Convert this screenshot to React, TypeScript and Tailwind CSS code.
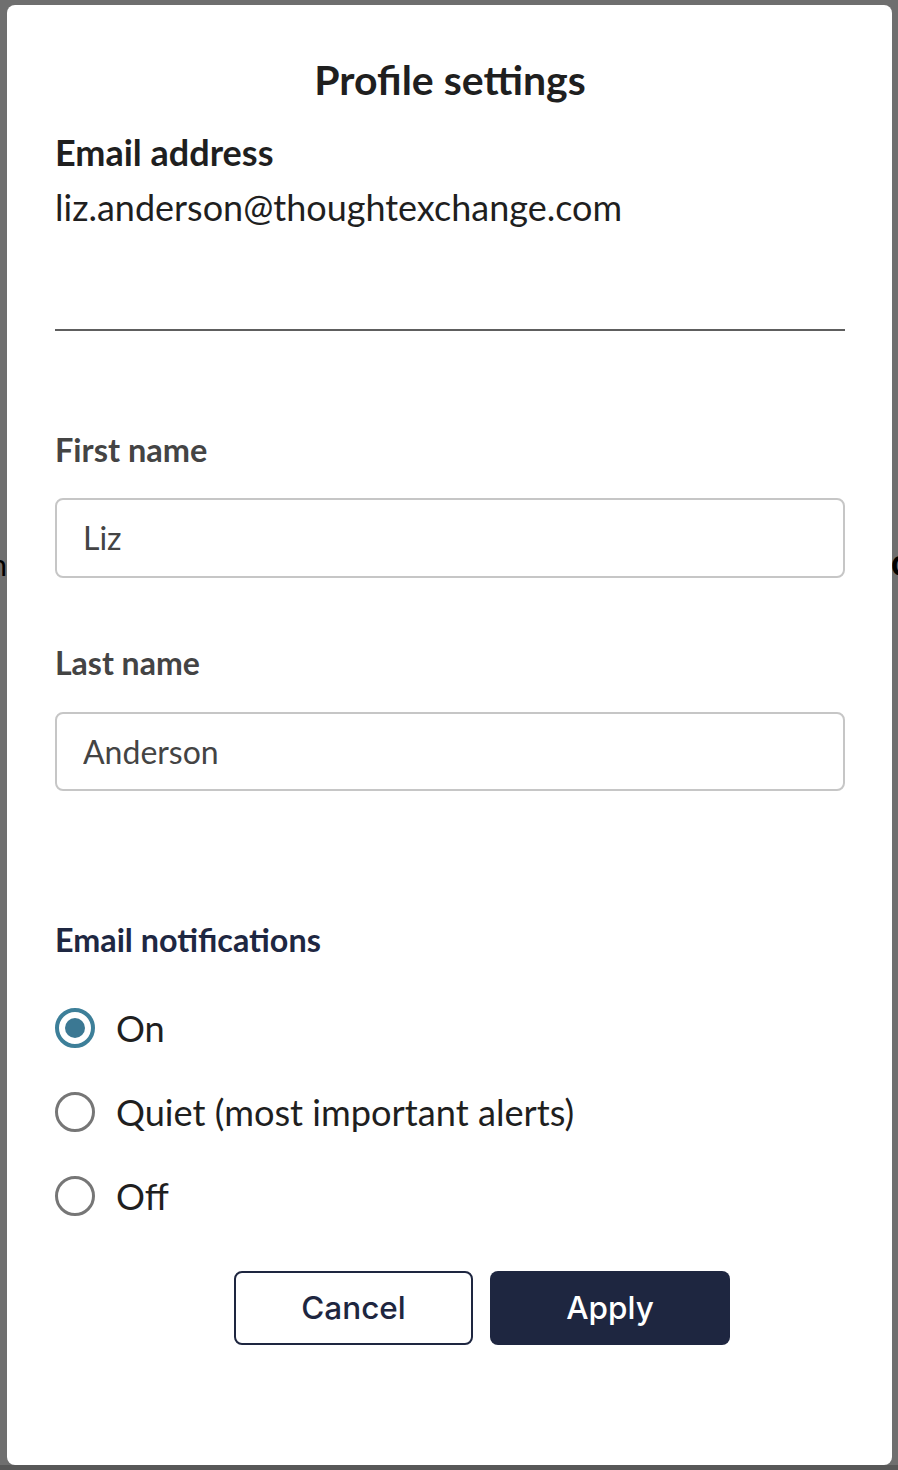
import { useState } from "react"

const NOTIFY_OPTIONS = [
  { value: "on", label: "On" },
  { value: "quiet", label: "Quiet (most important alerts)" },
  { value: "off", label: "Off" },
]

const lato = { fontFamily: "Lato, 'Noto Sans', sans-serif" }

const Radio = ({ checked }: { checked: boolean }) =>
  checked ? (
    <span className="flex size-[40px] shrink-0 items-center justify-center rounded-full border-[4px] border-[#3d7f99]">
      <span className="size-[20px] rounded-full bg-[#3b7893]" />
    </span>
  ) : (
    <span className="size-[40px] shrink-0 rounded-full border-[3.5px] border-[#767676]" />
  )

export default function App() {
  const [first, setFirst] = useState("Liz")
  const [last, setLast] = useState("Anderson")
  const [notify, setNotify] = useState("on")

  return (
    <div className="flex h-[1470px] w-[898px] flex-col overflow-hidden bg-[#6f6f6f]" style={lato}>
      <div className="flex h-[1465px] pt-[5px]">
        {/* bits of the page behind the modal */}
        <div className="flex w-[7px] shrink-0 justify-end overflow-hidden pt-[544px]">
          <span className="text-[30px] leading-none text-black">n</span>
        </div>

        <div className="w-[885px] shrink-0 rounded-[8px] bg-white pl-[48px] pr-[47px] pt-[54px]">
          <h2 className="text-center text-[41px] font-bold leading-none text-[#1f1f1f]">Profile settings</h2>

          <p className="mt-[34px] text-[36px] font-bold leading-none text-[#1f1f1f]">Email address</p>
          <p className="mt-[19px] text-[36px] leading-none text-[#1f1f1f]">liz.anderson@thoughtexchange.com</p>

          <div className="mt-[104px] h-[2px] bg-[#5e5e5e]" />

          <label htmlFor="first" className="mt-[103px] block text-[32.5px] font-bold leading-none text-[#444444]">
            First name
          </label>
          <input
            id="first"
            value={first}
            onChange={(e) => setFirst(e.target.value)}
            className="mt-[31px] block h-[80px] w-full rounded-[8px] border-2 border-[#c6c6c6] pl-[26px] text-[32px] leading-none text-[#444444] outline-none"
            style={lato}
          />

          <label htmlFor="last" className="mt-[69px] block text-[32px] font-bold leading-none text-[#444444]">
            Last name
          </label>
          <input
            id="last"
            value={last}
            onChange={(e) => setLast(e.target.value)}
            className="mt-[33px] block h-[79px] w-full rounded-[8px] border-2 border-[#c6c6c6] pl-[26px] text-[32px] leading-none text-[#444444] outline-none"
            style={lato}
          />

          <p className="mt-[133px] text-[32.3px] font-bold leading-none text-[#1e2742]">Email notifications</p>

          <div className="mt-[30px] flex flex-col">
            {NOTIFY_OPTIONS.map((opt) => (
              <button
                key={opt.value}
                type="button"
                onClick={() => setNotify(opt.value)}
                className="flex h-[84px] items-center gap-[21px] text-left"
              >
                <Radio checked={notify === opt.value} />
                <span className="text-[36.2px] leading-none text-[#1f1f1f]">{opt.label}</span>
              </button>
            ))}
          </div>

          <div className="ml-[179px] mt-[33px] flex gap-[17px]" style={{ fontFamily: "Inter, 'Liberation Sans', sans-serif" }}>
            <button
              type="button"
              className="h-[74px] w-[239px] rounded-[8px] border-2 border-[#1e2640] text-[31.5px] font-medium text-[#1e2640]"
            >
              Cancel
            </button>
            <button
              type="submit"
              className="h-[74px] w-[240px] rounded-[8px] bg-[#1e2640] text-[31.5px] font-medium text-white"
            >
              Apply
            </button>
          </div>
        </div>

        <div className="flex w-[6px] shrink-0 overflow-hidden pt-[538px]">
          <span className="-ml-[1px] text-[36px] font-bold leading-none text-black">d</span>
        </div>
      </div>
      <div className="h-[5px] bg-[#585858]" />
    </div>
  )
}
